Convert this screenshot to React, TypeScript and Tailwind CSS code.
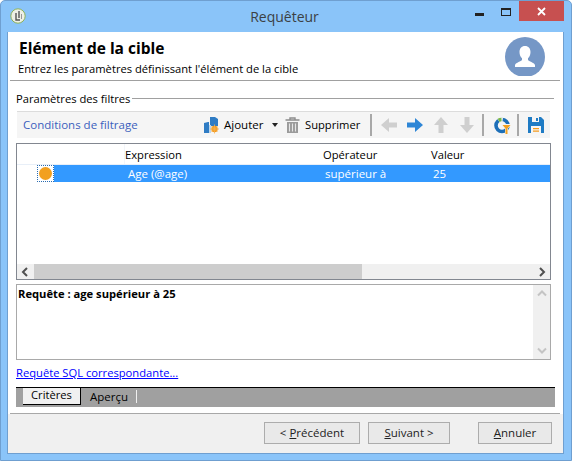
const ui = { fontFamily: "'Open Sans', 'Noto Sans', sans-serif" }

function AppIcon() {
  return (
    <svg width="16" height="16" viewBox="0 0 16 16">
      <circle cx="8" cy="8" r="7.2" fill="#eef0e6" stroke="#8fb35a" strokeWidth="1" />
      <path d="M6 5v7h4M9 3v7" fill="none" stroke="#555" strokeWidth="1.400" />
      <path d="M11.500 6v5" stroke="#999" strokeWidth="1" />
    </svg>
  )
}

function AddIcon() {
  return (
    <svg width="15" height="17" viewBox="0 0 15 17">
      <path d="M0 6l4-1h1v11H0z" fill="#2f7cc4" />
      <path d="M6 0h5l3 2v7H6z" fill="#2f7cc4" />
      <path d="M5 8h2v8H5z" fill="#bcd6ec" />
      <circle cx="10.500" cy="12" r="3.200" fill="#f39a1c" />
      <path d="M10.500 7.500v9M6 12h9M7.500 9l6 6M13.500 9l-6 6" stroke="#f6b04f" strokeWidth="0.800" />
    </svg>
  )
}

function TrashIcon() {
  return (
    <svg width="15" height="16" viewBox="0 0 15 16">
      <path d="M0.500 3h14M5 3V1h5v2" fill="none" stroke="#8c8c8c" strokeWidth="1.400" />
      <path d="M2 5h11v11H2z" fill="#9b9b9b" />
      <path d="M4.500 6.500v8M7.500 6.500v8M10.500 6.500v8" stroke="#e6e6e6" strokeWidth="1.100" />
    </svg>
  )
}

function ArrowIcon({ dir, color }: { dir: "left" | "right" | "up" | "down"; color: string }) {
  const rotate = { right: 0, down: 90, left: 180, up: 270 }[dir]
  return (
    <svg width="16" height="16" viewBox="0 0 16 16" style={{ transform: `rotate(${rotate}deg)` }}>
      <path d="M0 5.500h8V1l8 7-8 7v-4.500H0z" fill={color} />
    </svg>
  )
}

function FilterIcon() {
  return (
    <svg width="17" height="17" viewBox="0 0 17 17">
      <circle cx="8" cy="8.500" r="6" fill="none" stroke="#1d6fb8" strokeWidth="3.600" />
      <path d="M3 1.500L8 8.500 9 0.500A8 8 0 0 0 3 1.500z" fill="#f5f5f5" />
      <path d="M4.600 3.400A6 6 0 0 1 7.500 2.500" fill="none" stroke="#7ab648" strokeWidth="3.600" />
      <path d="M7.500 7h9.500v1.500l-3 3v5.500h-3v-5.500l-3.500-3z" fill="#f5f5f5" />
      <path d="M8.500 8h8l-3 3.500V17h-2v-5.500z" fill="#f4a11f" />
    </svg>
  )
}

function SaveIcon() {
  return (
    <svg width="16" height="16" viewBox="0 0 16 16">
      <path d="M0 0h13l3 3v13H0z" fill="#1f7bc4" />
      <path d="M4 0h7v5H4z" fill="#f5f5f5" />
      <path d="M8 1h2v3H8z" fill="#1f7bc4" />
      <path d="M3 9h10v7H3z" fill="#f5f5f5" />
      <path d="M5 11h6v1.200H5zM5 13.500h6v1.200H5z" fill="#f39a1c" />
    </svg>
  )
}

function Avatar() {
  return (
    <div className="w-10 h-[39px] overflow-hidden">
      <div className="w-10 h-10 rounded-full bg-[#7597c6]">
        <svg width="40" height="40" viewBox="0 0 40 40">
          <path
            d="M20 9c-3.500 0-5.500 2.600-5.500 6 0 2.500.8 4.600 2.500 6.200v1.800c-.8 1.600-6 2.300-7 5v2h20v-2c-1-2.700-6.200-3.400-7-5v-1.800c1.700-1.600 2.500-3.700 2.500-6.200 0-3.400-2-6-5.500-6z"
            fill="#fff"
          />
        </svg>
      </div>
    </div>
  )
}

function ToolbarSep() {
  return <div className="w-[2px] h-[22px] bg-[#a8a8a8]" />
}

function Chevron({ dir, color }: { dir: "left" | "right" | "up" | "down"; color: string }) {
  const d = {
    left: "M6 1L2 5l4 4",
    right: "M3 1l4 4-4 4",
    up: "M1 6.500l4-4 4 4",
    down: "M1 3.500l4 4 4-4",
  }[dir]
  return (
    <svg width="10" height="10" viewBox="0 0 10 10">
      <path d={d} fill="none" stroke={color} strokeWidth="2" />
    </svg>
  )
}

function WizardButton({ width, children }: { width: string; children: React.ReactNode }) {
  return (
    <button
      type="button"
      className={`h-[22px] border border-[#acacac] bg-[#e9e9e9] text-[11.5px] text-[#222] flex items-center justify-center ${width}`}
    >
      {children}
    </button>
  )
}

export default function App() {
  return (
    <div className="w-[575px] h-[463px] bg-white overflow-hidden text-[11.2px] text-black" style={ui}>
      <div className="w-[572px] h-[461px] bg-[#8ac4f9] border border-[#6f9fd0] rounded-t-[5px] flex flex-col">
        {/* Title bar */}
        <div className="h-[31px] shrink-0 relative flex items-center justify-center">
          <div className="absolute left-[9px] top-[7px]">
            <AppIcon />
          </div>
          <span className="text-[14px] leading-none text-[#3c3f44] pr-[3px]">Requêteur</span>
          <div className="absolute left-[474px] top-[12px] w-[9px] h-[3px] bg-[#222]" />
          <div className="absolute left-[500px] top-[7px] w-[10px] h-[8px] border border-[#222] border-t-2" />
          <div className="absolute left-[518px] top-0 w-[45px] h-[20px] bg-[#c75050] flex items-center justify-center">
            <svg width="9" height="9" viewBox="0 0 9 9">
              <path d="M1 1l7 7M8 1L1 8" stroke="#fff" strokeWidth="1.800" />
            </svg>
          </div>
        </div>

        {/* Client area */}
        <div className="mx-[6px] w-[557px] h-[422px] border-x border-b border-[#6f9fd0] bg-white flex flex-col">
          {/* Header */}
          <div className="h-[49px] shrink-0 ml-[2px] mr-[3px] border-b border-[#a0a0a0] pl-[8px] relative">
            <div className="text-[15.5px] leading-[20px] font-bold pt-[6px] h-[26px] ml-[1px]">Elément de la cible</div>
            <div className="leading-[16px] mt-[3px]">Entrez les paramètres définissant l'élément de la cible</div>
            <div className="absolute left-[495px] top-[5px]">
              <Avatar />
            </div>
          </div>

          <div className="flex-1 pl-[8px] pr-[12px] flex flex-col">
            {/* Section title */}
            <div className="h-[17px] mt-[9px] flex items-center">
              <span className="leading-none">Paramètres des filtres</span>
              <div className="flex-1 h-[1px] bg-[#a0a0a0] ml-[2px] -mr-[3px]" />
            </div>

            {/* Toolbar */}
            <div className="h-[27px] mt-[4px] ml-[1px] mr-[1px] border-t border-[#dcdcdc] bg-[#f5f5f5] flex items-center">
              <span className="text-[11.5px] text-[#3b5fbd] ml-[6px] w-[181px]">Conditions de filtrage</span>
              <AddIcon />
              <span className="text-[11.5px] ml-[5px] w-[48px]">Ajouter</span>
              <div className="w-0 h-0 border-x-[3.500px] border-x-transparent border-t-[4px] border-t-[#222]" />
              <div className="ml-[7px]">
                <TrashIcon />
              </div>
              <span className="ml-[5px] w-[60px]">Supprimer</span>
              <div className="ml-[5px]">
                <ToolbarSep />
              </div>
              <div className="ml-[9px]">
                <ArrowIcon dir="left" color="#cfcfcf" />
              </div>
              <div className="ml-[10px]">
                <ArrowIcon dir="right" color="#2e86d6" />
              </div>
              <div className="ml-[10px]">
                <ArrowIcon dir="up" color="#cfcfcf" />
              </div>
              <div className="ml-[10px]">
                <ArrowIcon dir="down" color="#cfcfcf" />
              </div>
              <div className="ml-[7px]">
                <ToolbarSep />
              </div>
              <div className="ml-[10px]">
                <FilterIcon />
              </div>
              <div className="ml-[6px]">
                <ToolbarSep />
              </div>
              <div className="ml-[9px]">
                <SaveIcon />
              </div>
            </div>

            {/* Filter list */}
            <div className="h-[137px] mt-[5px] border border-[#828790] flex flex-col">
              <div className="h-[21px] shrink-0 border-b border-[#e8eff8] relative">
                <span className="absolute left-[108px] top-[3px] leading-[16px]">Expression</span>
                <span className="absolute left-[306px] top-[3px] leading-[16px]">Opérateur</span>
                <span className="absolute left-[414px] top-[3px] leading-[16px]">Valeur</span>
                <div className="absolute left-[107px] top-0 h-[20px] w-[1px] bg-[#f2f5fa]" />
              </div>
              <div className="h-[17px] shrink-0 flex pl-[20px]">
                <div className="w-[17px] h-[17px] border border-dotted border-[#2b6cb0] flex items-center justify-center">
                  <div className="w-[13px] h-[13px] rounded-full bg-[#f2a01f]" />
                </div>
                <div className="flex-1 bg-[#3399ff] text-white text-[11.5px] relative">
                  <span className="absolute left-[74px] top-0 leading-[17px]">Age (@age)</span>
                  <span className="absolute left-[271px] top-0 leading-[17px]">supérieur à</span>
                  <span className="absolute left-[379px] top-0 leading-[17px]">25</span>
                </div>
              </div>
              <div className="flex-1" />
              <div className="h-[15px] shrink-0 flex bg-[#f0f0f0]">
                <div className="w-[17px] flex items-center justify-center">
                  <Chevron dir="left" color="#505050" />
                </div>
                <div className="w-[328px] bg-[#cdcdcd]" />
                <div className="flex-1" />
                <div className="w-[17px] flex items-center justify-center">
                  <Chevron dir="right" color="#505050" />
                </div>
              </div>
            </div>

            {/* Query box */}
            <div className="h-[76px] mt-[4px] border border-[#a9a9a9] flex">
              <div className="flex-1 font-bold pl-[1px] leading-[18px]">Requête : age supérieur à 25</div>
              <div className="w-[17px] bg-[#f0f0f0] flex flex-col items-center justify-between py-[4px]">
                <Chevron dir="up" color="#c4c4c4" />
                <Chevron dir="down" color="#c4c4c4" />
              </div>
            </div>

            {/* SQL link */}
            <div className="h-[27px] pt-[5px] leading-[16px]">
              <span className="text-[#0000ff] underline">Requête SQL correspondante...</span>
            </div>

            {/* Tabs */}
            <div className="h-[20px] -mr-[4px] border-t border-black bg-[#a0a0a0] flex pl-[7px]">
              <div className="w-[58px] h-[17px] bg-[#f0f0f0] border-b border-r border-black text-center leading-[14px]">
                Critères
              </div>
              <span className="ml-[9px] w-[46px] text-[11.5px] leading-[17px]">Aperçu</span>
              <div className="mt-[2px] w-[1px] h-[13px] bg-[#f0f0f0]" />
            </div>
          </div>

          {/* Footer */}
          <div className="h-[40px] shrink-0 bg-[#f0f0f0] border-t border-[#a8a8a8] flex items-start pt-[8px] relative">
            <div className="absolute left-0 top-[-1px] w-[2px] h-[1px] bg-white" />
            <div className="absolute right-0 top-[-1px] w-[3px] h-[1px] bg-white" />
            <div className="ml-[256px]">
              <WizardButton width="w-[96px]">
                &lt;&nbsp;<span className="underline">P</span>récédent
              </WizardButton>
            </div>
            <div className="ml-[8px]">
              <WizardButton width="w-[82px]">
                <span className="underline">S</span>uivant &gt;
              </WizardButton>
            </div>
            <div className="ml-[28px]">
              <WizardButton width="w-[74px]">
                <span className="underline">A</span>nnuler
              </WizardButton>
            </div>
          </div>
        </div>
      </div>
    </div>
  )
}
